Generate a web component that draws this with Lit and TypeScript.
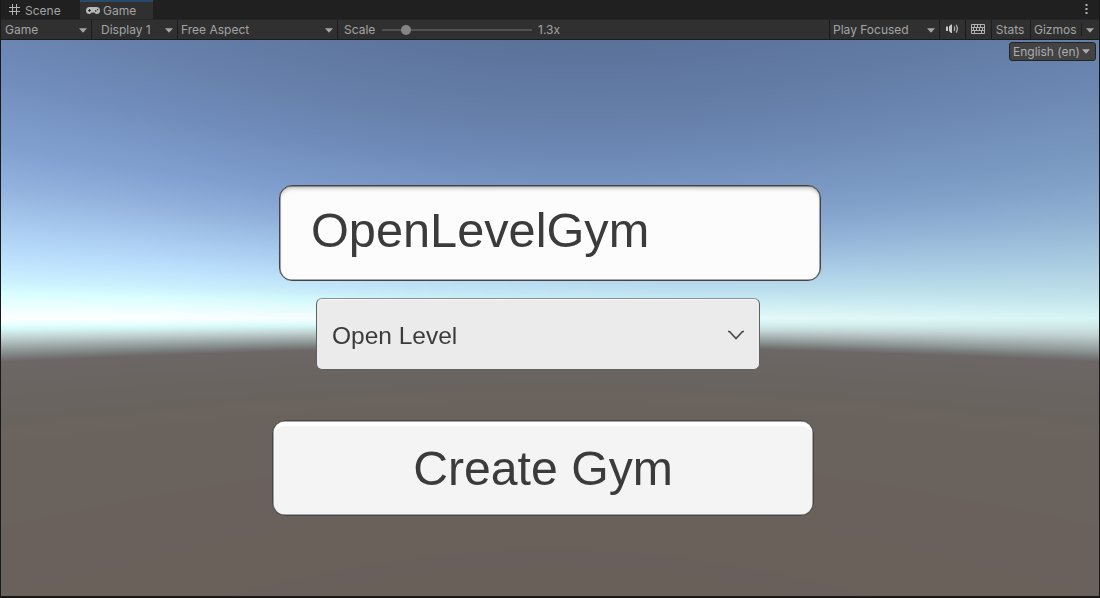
import { LitElement, html, css, svg } from "lit";
import { customElement, property } from "lit/decorators.js";

type RGB = [number, number, number];
type Stop = [number, RGB];

const HORIZON = 278;
const FOCAL = 481;

// Sky colour by distance from the horizon on the sun side of the view.
const SUN_SIDE: Stop[] = [
  [-278, [92, 115, 156]],
  [-200, [104, 130, 173]],
  [-160, [112, 140, 187]],
  [-113, [129, 160, 208]],
  [-89, [145, 176, 220]],
  [-66, [164, 198, 236]],
  [-43, [185, 221, 252]],
  [-25, [203, 240, 254]],
  [-17, [216, 254, 255]],
  [-8, [236, 255, 255]],
  [0, [253, 255, 255]],
  [4, [232, 255, 255]],
  [7, [214, 249, 249]],
  [10, [204, 229, 228]],
  [14, [186, 202, 201]],
  [20, [150, 160, 160]],
  [25, [123, 126, 126]],
  [28.5, [108, 103, 102]],
  [55, [105, 100, 95]],
  [90, [106, 98, 93]],
  [278, [106, 96, 90]],
];

const SHADE_SIDE: Stop[] = [
  [-278, [88, 110, 151]],
  [-200, [98, 124, 165]],
  [-160, [106, 134, 176]],
  [-113, [119, 150, 190]],
  [-89, [129, 161, 200]],
  [-66, [145, 177, 210]],
  [-43, [164, 198, 222]],
  [-18, [188, 222, 233]],
  [0, [215, 245, 245]],
  [6, [206, 230, 230]],
  [11, [192, 211, 210]],
  [16, [170, 183, 182]],
  [21, [145, 153, 153]],
  [25, [122, 125, 125]],
  [28.5, [108, 103, 102]],
  [55, [105, 100, 95]],
  [90, [106, 98, 93]],
  [278, [106, 96, 90]],
];

function sample(stops: Stop[], at: number): RGB {
  for (let i = 1; i < stops.length; i++) {
    const [p1, c1] = stops[i];
    if (at <= p1) {
      const [p0, c0] = stops[i - 1];
      const t = Math.max(0, (at - p0) / (p1 - p0));
      return [0, 1, 2].map((k) => c0[k] + (c1[k] - c0[k]) * t) as RGB;
    }
  }
  return stops[stops.length - 1][1];
}

@customElement("sky-view")
export class SkyView extends LitElement {
  static styles = css`
    :host { display: block; }
    canvas { display: block; width: 100%; height: 100%; }
  `;

  firstUpdated() {
    const canvas = this.renderRoot.querySelector("canvas")!;
    const ctx = canvas.getContext("2d")!;
    const { width, height } = canvas;
    const image = ctx.createImageData(width, height);
    for (let x = 0; x < width; x++) {
      const dx = x - width / 2;
      const scale = FOCAL / Math.hypot(dx, FOCAL);
      const mix = Math.max(0, Math.min(1, (x / width) * 1.15 - 0.15));
      for (let y = 0; y < height; y++) {
        const s = (y - HORIZON) * scale;
        const a = sample(SUN_SIDE, s);
        const b = sample(SHADE_SIDE, s);
        const o = (y * width + x) * 4;
        for (let k = 0; k < 3; k++) image.data[o + k] = Math.round(a[k] + (b[k] - a[k]) * mix);
        image.data[o + 3] = 255;
      }
    }
    ctx.putImageData(image, 0, 0);
  }

  render() {
    return html`<canvas width="1098" height="556"></canvas>`;
  }
}

@customElement("tool-menu")
export class ToolMenu extends LitElement {
  @property() label = "";

  static styles = css`
    :host {
      display: flex;
      align-items: center;
      justify-content: space-between;
      box-sizing: border-box;
      border-right: 1px solid #1b1b1b;
      padding: 0 4px;
    }
    span { padding-top: 1px; }
    svg { display: block; flex: none; margin-top: 1px; }
  `;

  render() {
    return html`<span>${this.label}</span>
      <svg width="8" height="5" viewBox="0 0 8 5"><path d="M0 .3H8L4 4.7Z" fill="#a6a6a6" /></svg>`;
  }
}

const gridIcon = svg`<path d="M3.5 0V11M7.5 0V11M0 3.5H11M0 7.5H11" stroke="#b4b4b4" fill="none" />`;
const padIcon = svg`
  <path fill-rule="evenodd" fill="#b8b8b8" d="M3.5 0H10.5A3.5 3.5 0 0 1 14 3.5A3.5 3.5 0 0 1 10.5 7C9.2 7 8.7 5.8 8 5.5H6C5.3 5.8 4.8 7 3.5 7A3.5 3.5 0 0 1 0 3.5A3.5 3.5 0 0 1 3.5 0ZM3 2V3H2V4H3V5H4V4H5V3H4V2ZM9 3.3V4.7H10.3V3.3ZM11 2V3.3H12.2V2Z" />`;
const soundIcon = svg`
  <path d="M0 2.500H2V7H0ZM3 2.500L5 .5H6V9H5L3 7Z" fill="#c8c8c8" />
  <path d="M8 2.500Q9.400 4.700 8 7M10 .8Q12.800 4.700 10 8.700" stroke="#b4b4b4" fill="none" stroke-width="1.200" />`;
const keysIcon = svg`
  <path d="M.5 .5H13.5V9.5H.5ZM.5 3.5H13.5M.5 6.5H13.5M3.5 .5V3.5M6.5 .5V3.5M9.5 .5V3.5M2.5 3.5V6.5M5.5 3.5V6.5M8.5 3.5V6.5M11.5 3.5V6.5M3.5 6.5V9.5M10.5 6.5V9.5" stroke="#b0b0b0" fill="none" />`;

@customElement("app-root")
export class AppRoot extends LitElement {
  static styles = css`
    :host {
      display: flex;
      flex-direction: column;
      box-sizing: border-box;
      width: 1100px;
      height: 598px;
      padding: 0 1px 2px;
      background: #191919;
      color: #a4a4a4;
      font: 12px/16px Inter, sans-serif;
      overflow: hidden;
      white-space: nowrap;
    }
    svg { display: block; flex: none; }
    .tabs { display: flex; height: 19px; background: #202020; }
    .tab { display: flex; box-sizing: border-box; align-items: center; height: 19px; padding-top: 3px; }
    .scene { width: 79px; padding-left: 8px; gap: 5px; }
    .scene svg { margin-top: -3px; }
    .game { width: 73px; padding: 1px 0 0 6px; gap: 3px; background: #303030; border-top: 2px solid #2a4a6b; }
    .game svg { margin: -1px 0 0 0; }
    .more { margin: 4px 11px 0 auto; }
    .bar { display: flex; height: 21px; box-sizing: border-box; background: #303030; border-top: 1px solid #262626; border-bottom: 1px solid #1b1b1b; }
    .mode { width: 91px; }
    .display { width: 86px; padding-left: 9px; }
    .aspect { width: 160px; padding-left: 3px; }
    .scale { display: flex; align-items: center; padding-left: 6px; flex: 1; }
    .scale span, .gizmos span { padding-top: 1px; }
    .label { width: 32px; }
    .track { position: relative; width: 150px; height: 2px; margin: 1px 6px 0 6px; background: #505050; }
    .knob { position: absolute; left: 19px; top: -4px; width: 10px; height: 10px; border-radius: 50%; background: #858585; }
    .focus { width: 111px; border-left: 1px solid #1b1b1b; padding-left: 3px; }
    .cell { display: flex; box-sizing: border-box; align-items: center; justify-content: center; border-right: 1px solid #1b1b1b; }
    .icon { width: 26px; padding: 0 1px 1px 0; }
    .stats { width: 39px; padding: 1px 2px 0 0; }
    .gizmos { display: flex; box-sizing: border-box; align-items: center; width: 68px; padding-left: 3px; }
    .split { width: 1px; height: 13px; margin: 0 4px 0 auto; background: #1e1e1e; }
    .gizmos svg { margin: 1px 5px 0 0; }
    .view { display: grid; height: 556px; }
    .view > * { grid-area: 1 / 1; }
    .overlay { display: flex; flex-direction: column; z-index: 1; font-family: "Liberation Sans", Arial, sans-serif; color: #3b3b3b; }
    .lang {
      display: flex; align-items: center; justify-content: space-between; align-self: flex-end;
      box-sizing: border-box; width: 87px; height: 19px; margin: 2px 3px 0 0; padding: 0 5px 0 3px;
      border: 1px solid #242424; border-radius: 3px; background: #434343; color: #adadad;
      font-family: Inter, sans-serif;
    }
    .field, .pick, .create { display: flex; align-items: center; box-sizing: border-box; }
    .field {
      width: 542px; height: 96px; margin: 124px 0 0 278px; padding: 0 0 7px 31px;
      border: 1px solid #444; border-radius: 13px; background: #fcfcfc;
      box-shadow: inset 0 0 0 0.5px #555, inset 0 4px 4px -2px rgba(0, 0, 0, 0.3); font-size: 48.7px; line-height: 56px;
    }
    .pick {
      justify-content: space-between; width: 444px; height: 72px; margin: 17px 0 0 315px; padding: 3px 14px 0 15px;
      border: 1px solid #606060; border-top-color: #8a9090; border-radius: 6px; background: #ebebeb;
      box-shadow: inset 0 1px 0 #f8f8f8; font-size: 24.5px; line-height: 28px;
    }
    .create {
      justify-content: center; width: 542px; height: 96px; margin: 50px 0 0 271px; padding: 0 0 1px;
      border: 1px solid #444; border-radius: 13px; background: #f4f4f4;
      box-shadow: inset 0 0 0 0.5px #555, inset 0 5px 1px #fff; font-size: 48.2px; line-height: 56px;
    }
  `;

  render() {
    return html`
      <div class="tabs">
        <div class="tab scene"><svg width="11" height="11" viewBox="0 0 11 11">${gridIcon}</svg><span>Scene</span></div>
        <div class="tab game"><svg width="14" height="7" viewBox="0 0 14 7">${padIcon}</svg><span>Game</span></div>
        <svg class="more" width="3" height="11" viewBox="0 0 3 11"><path d="M.5 0h2v2h-2ZM.5 4h2v2h-2ZM.5 8h2v2h-2Z" fill="#b4b4b4" /></svg>
      </div>
      <div class="bar">
        <tool-menu class="mode" label="Game"></tool-menu>
        <tool-menu class="display" label="Display 1"></tool-menu>
        <tool-menu class="aspect" label="Free Aspect"></tool-menu>
        <div class="scale"><span class="label">Scale</span><div class="track"><div class="knob"></div></div><span>1.3x</span></div>
        <tool-menu class="focus" label="Play Focused"></tool-menu>
        <div class="cell icon"><svg width="13" height="10" viewBox="0 0 13 10">${soundIcon}</svg></div>
        <div class="cell icon"><svg width="14" height="10" viewBox="0 0 14 10">${keysIcon}</svg></div>
        <div class="cell stats">Stats</div>
        <div class="gizmos"><span>Gizmos</span><div class="split"></div>
          <svg width="8" height="5" viewBox="0 0 8 5"><path d="M0 .3H8L4 4.7Z" fill="#a6a6a6" /></svg></div>
      </div>
      <div class="view">
        <sky-view></sky-view>
        <div class="overlay">
          <div class="lang"><span>English (en)</span>
            <svg width="8" height="5" viewBox="0 0 8 5"><path d="M0 .3H8L4 4.7Z" fill="#adadad" /></svg></div>
          <div class="field">OpenLevelGym</div>
          <div class="pick"><span>Open Level</span>
            <svg width="18" height="11" viewBox="0 0 18 11"><path d="M1 1.5L2.5 1.5L9 8.5L15.5 1.5L17 1.5" fill="none" stroke="#4a4a4a" stroke-width="1.7" /></svg></div>
          <div class="create">Create Gym</div>
        </div>
      </div>
    `;
  }
}
